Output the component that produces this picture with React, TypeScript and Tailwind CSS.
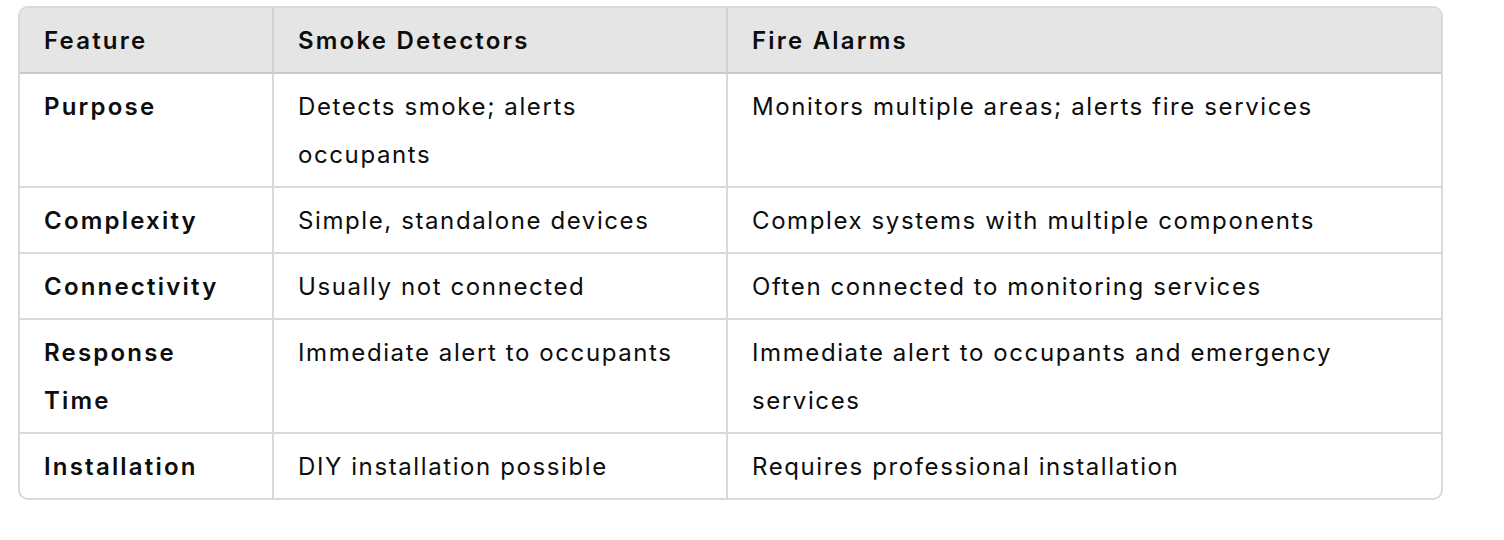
const rows: [string, string, string][] = [
  ['Purpose', 'Detects smoke; alerts occupants', 'Monitors multiple areas; alerts fire services'],
  ['Complexity', 'Simple, standalone devices', 'Complex systems with multiple components'],
  ['Connectivity', 'Usually not connected', 'Often connected to monitoring services'],
  ['Response Time', 'Immediate alert to occupants', 'Immediate alert to occupants and emergency services'],
  ['Installation', 'DIY installation possible', 'Requires professional installation'],
];

export default function App() {
  return (
    <div className="min-h-[540px] w-[1504px] bg-white pl-[18px] pt-[6px] text-[#0d0d0d]" style={{ fontFamily: 'Inter, "Noto Sans", sans-serif' }}>
      <div className="w-[1425px] overflow-hidden rounded-[10px] border-2 border-[#d9d9d9] text-[24px] leading-[48px] tracking-[1.6px]">
        <div className="grid grid-cols-[252px_454px_1fr] border-b-2 border-[#c9c9c9] bg-[#e5e5e5] font-semibold tracking-[2.2px]">
          <div className="pt-[9px] pb-[7px] pl-6 pr-8">Feature</div>
          <div className="border-l-2 border-[#d2d2d2] px-6 pt-[9px] pb-[7px]">Smoke Detectors</div>
          <div className="border-l-2 border-[#d2d2d2] px-6 pt-[9px] pb-[7px]">Fire Alarms</div>
        </div>
        {rows.map((r, i) => (
          <div
            key={r[0]}
            className={`grid grid-cols-[252px_454px_1fr] ${i < rows.length - 1 ? 'border-b-2 border-[#d9d9d9]' : ''}`}
          >
            <div className="pt-[9px] pb-[7px] pl-6 pr-8 font-semibold tracking-[2.2px]">{r[0]}</div>
            <div className="border-l-2 border-[#d9d9d9] px-6 pt-[9px] pb-[7px]">{r[1]}</div>
            <div className="border-l-2 border-[#d9d9d9] px-6 pt-[9px] pb-[7px]">{r[2]}</div>
          </div>
        ))}
      </div>
    </div>
  );
}
